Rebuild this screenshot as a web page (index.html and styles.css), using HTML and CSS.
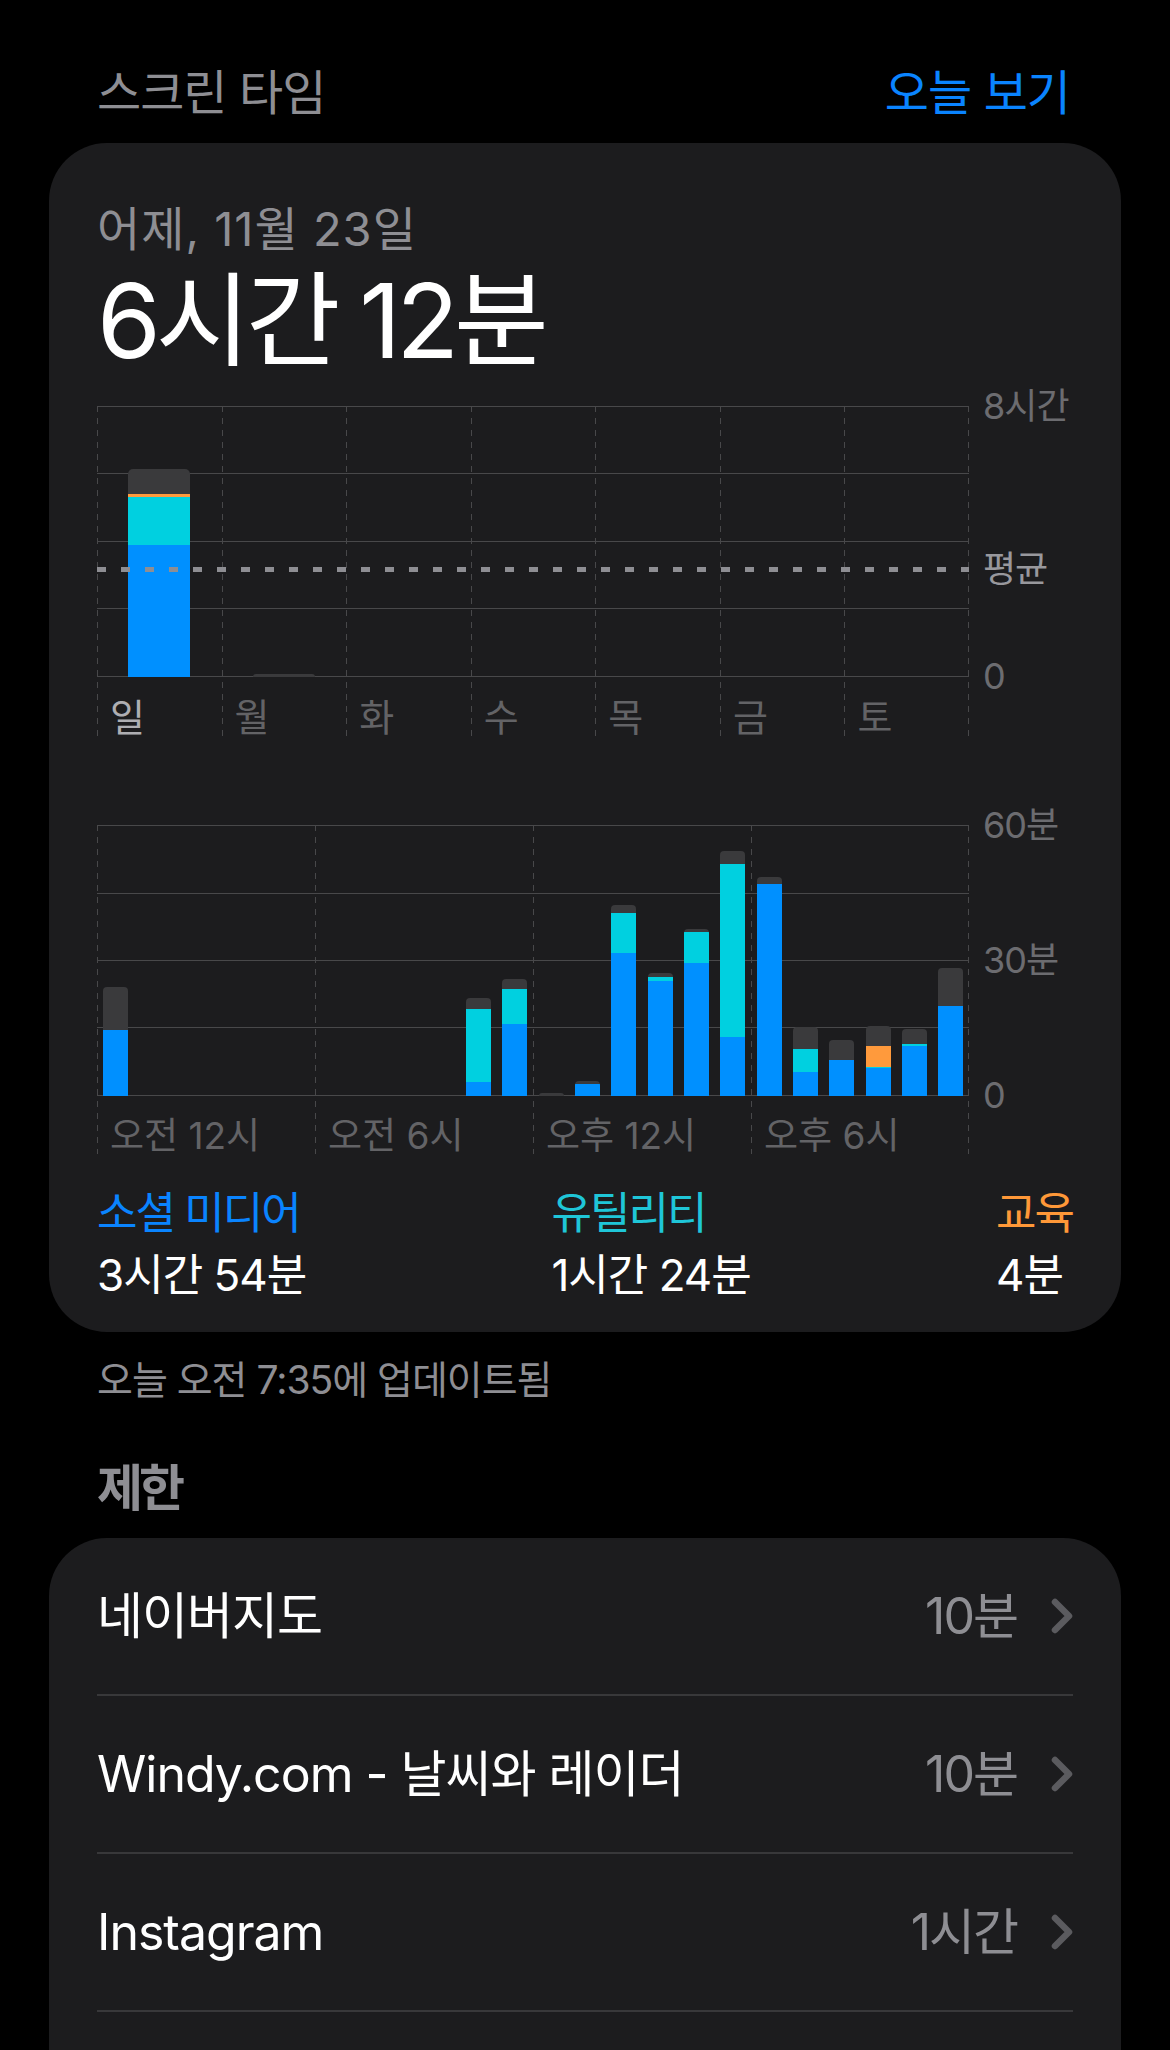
FILE: index.html
```html
<!DOCTYPE html>
<html lang="ko">
<head>
    <meta charset="UTF-8">
    <meta name="viewport" content="width=device-width, initial-scale=1.0">
    <title>스크린 타임</title>
    <link rel="stylesheet" href="styles.css">
</head>
<body>
    <div class="screen">
        <header class="nav">
            <span class="nav-title">스크린 타임</span>
            <span class="nav-link">오늘 보기</span>
        </header>

        <section class="card summary">
            <div class="date">어제, 11월 23일</div>
            <div class="total">6시간 12분</div>

            <!-- weekly chart -->
            <div class="chart week">
                <div class="plot">
                    <div class="col">
                        <div class="bar-area">
                            <div class="bar">
                                <i class="seg other" style="height:25px"></i>
                                <i class="seg edu" style="height:3px"></i>
                                <i class="seg util" style="height:48px"></i>
                                <i class="seg social" style="height:132px"></i>
                            </div>
                        </div>
                        <div class="x-label active">일</div>
                    </div>
                    <div class="col">
                        <div class="bar-area">
                            <div class="bar tiny">
                                <i class="seg other" style="height:3px"></i>
                            </div>
                        </div>
                        <div class="x-label">월</div>
                    </div>
                    <div class="col">
                        <div class="bar-area"></div>
                        <div class="x-label">화</div>
                    </div>
                    <div class="col">
                        <div class="bar-area"></div>
                        <div class="x-label">수</div>
                    </div>
                    <div class="col">
                        <div class="bar-area"></div>
                        <div class="x-label">목</div>
                    </div>
                    <div class="col">
                        <div class="bar-area"></div>
                        <div class="x-label">금</div>
                    </div>
                    <div class="col">
                        <div class="bar-area"></div>
                        <div class="x-label">토</div>
                    </div>
                    <div class="avg-line"></div>
                </div>
                <div class="y-axis">
                    <span class="y-label" style="top:0">8시간</span>
                    <span class="y-label avg" style="top:163px">평균</span>
                    <span class="y-label" style="top:270px">0</span>
                </div>
            </div>

            <!-- hourly chart -->
            <div class="chart hours">
                <div class="plot">
                    <div class="col">
                        <div class="bar-area">
                            <div class="slot">
                                <div class="bar">
                                    <i class="seg other" style="height:43px"></i>
                                    <i class="seg social" style="height:66px"></i>
                                </div>
                            </div>
                            <div class="slot"></div>
                            <div class="slot"></div>
                            <div class="slot"></div>
                            <div class="slot"></div>
                            <div class="slot"></div>
                        </div>
                        <div class="x-label">오전 12시</div>
                    </div>
                    <div class="col">
                        <div class="bar-area">
                            <div class="slot"></div>
                            <div class="slot"></div>
                            <div class="slot"></div>
                            <div class="slot"></div>
                            <div class="slot">
                                <div class="bar">
                                    <i class="seg other" style="height:11px"></i>
                                    <i class="seg util" style="height:73px"></i>
                                    <i class="seg social" style="height:14px"></i>
                                </div>
                            </div>
                            <div class="slot">
                                <div class="bar">
                                    <i class="seg other" style="height:10px"></i>
                                    <i class="seg util" style="height:35px"></i>
                                    <i class="seg social" style="height:72px"></i>
                                </div>
                            </div>
                        </div>
                        <div class="x-label">오전 6시</div>
                    </div>
                    <div class="col">
                        <div class="bar-area">
                            <div class="slot">
                                <div class="bar">
                                    <i class="seg other" style="height:3px"></i>
                                </div>
                            </div>
                            <div class="slot">
                                <div class="bar">
                                    <i class="seg other" style="height:3px"></i>
                                    <i class="seg social" style="height:12px"></i>
                                </div>
                            </div>
                            <div class="slot">
                                <div class="bar">
                                    <i class="seg other" style="height:8px"></i>
                                    <i class="seg util" style="height:40px"></i>
                                    <i class="seg social" style="height:143px"></i>
                                </div>
                            </div>
                            <div class="slot">
                                <div class="bar">
                                    <i class="seg other" style="height:4px"></i>
                                    <i class="seg util" style="height:4px"></i>
                                    <i class="seg social" style="height:115px"></i>
                                </div>
                            </div>
                            <div class="slot">
                                <div class="bar">
                                    <i class="seg other" style="height:3px"></i>
                                    <i class="seg util" style="height:31px"></i>
                                    <i class="seg social" style="height:133px"></i>
                                </div>
                            </div>
                            <div class="slot">
                                <div class="bar">
                                    <i class="seg other" style="height:13px"></i>
                                    <i class="seg util" style="height:173px"></i>
                                    <i class="seg social" style="height:59px"></i>
                                </div>
                            </div>
                        </div>
                        <div class="x-label">오후 12시</div>
                    </div>
                    <div class="col">
                        <div class="bar-area">
                            <div class="slot">
                                <div class="bar">
                                    <i class="seg other" style="height:7px"></i>
                                    <i class="seg social" style="height:212px"></i>
                                </div>
                            </div>
                            <div class="slot">
                                <div class="bar">
                                    <i class="seg other" style="height:22px"></i>
                                    <i class="seg util" style="height:23px"></i>
                                    <i class="seg social" style="height:24px"></i>
                                </div>
                            </div>
                            <div class="slot">
                                <div class="bar">
                                    <i class="seg other" style="height:20px"></i>
                                    <i class="seg social" style="height:36px"></i>
                                </div>
                            </div>
                            <div class="slot">
                                <div class="bar">
                                    <i class="seg other" style="height:20px"></i>
                                    <i class="seg edu" style="height:21px"></i>
                                    <i class="seg util" style="height:1px"></i>
                                    <i class="seg social" style="height:28px"></i>
                                </div>
                            </div>
                            <div class="slot">
                                <div class="bar">
                                    <i class="seg other" style="height:15px"></i>
                                    <i class="seg util" style="height:2px"></i>
                                    <i class="seg social" style="height:50px"></i>
                                </div>
                            </div>
                            <div class="slot">
                                <div class="bar">
                                    <i class="seg other" style="height:38px"></i>
                                    <i class="seg social" style="height:90px"></i>
                                </div>
                            </div>
                        </div>
                        <div class="x-label">오후 6시</div>
                    </div>
                </div>
                <div class="y-axis">
                    <span class="y-label" style="top:0">60분</span>
                    <span class="y-label" style="top:135px">30분</span>
                    <span class="y-label" style="top:270px">0</span>
                </div>
            </div>

            <div class="legend">
                <div class="legend-item">
                    <div class="legend-name social-text">소셜 미디어</div>
                    <div class="legend-value">3시간 54분</div>
                </div>
                <div class="legend-item">
                    <div class="legend-name util-text">유틸리티</div>
                    <div class="legend-value">1시간 24분</div>
                </div>
                <div class="legend-item">
                    <div class="legend-name edu-text">교육</div>
                    <div class="legend-value">4분</div>
                </div>
            </div>
        </section>

        <p class="updated">오늘 오전 7:35에 업데이트됨</p>

        <h2 class="section-title">제한</h2>

        <section class="card list">
            <div class="row">
                <span class="row-name">네이버지도</span>
                <span class="row-value">10분</span>
                <svg class="chevron" viewBox="0 0 22 36"><path d="M4 4l14 14L4 32"/></svg>
            </div>
            <div class="row">
                <span class="row-name">Windy.com - 날씨와 레이더</span>
                <span class="row-value">10분</span>
                <svg class="chevron" viewBox="0 0 22 36"><path d="M4 4l14 14L4 32"/></svg>
            </div>
            <div class="row">
                <span class="row-name">Instagram</span>
                <span class="row-value">1시간</span>
                <svg class="chevron" viewBox="0 0 22 36"><path d="M4 4l14 14L4 32"/></svg>
            </div>
            <div class="row last"></div>
        </section>
    </div>
</body>
</html>
```

FILE: styles.css
```css
body {
    margin: 0;
    background-color: #000;
    color: #fff;
    font-family: Inter, "Noto Sans CJK KR", sans-serif;
}

.screen {
    width: 1170px;
    overflow: hidden;
}

/* top bar */
.nav {
    display: flex;
    justify-content: space-between;
    padding: 69px 100px 0 97px;
    font-size: 48px;
    line-height: 1;
    letter-spacing: -1px;
}

.nav-title {
    color: #8e8e93;
}

.nav-link {
    color: #0a84ff;
}

.card {
    margin: 0 49px;
    background-color: #1c1c1e;
    border-radius: 58px;
}

.summary {
    margin-top: 26px;
    padding: 62px 48px 26px;
}

.date {
    font-size: 47px;
    line-height: 1;
    color: #8e8e93;
    letter-spacing: 1px;
}

.total {
    margin-top: 17px;
    font-size: 103px;
    line-height: 1;
    letter-spacing: -5px;
}

/* charts */
.chart {
    display: grid;
    grid-template-columns: 872px 1fr;
}

.chart.week {
    margin-top: 34px;
}

.chart.hours {
    margin-top: 89px;
}

.plot {
    position: relative;
    display: flex;
    background-image: linear-gradient(#48484a 50%, transparent 50%);
    background-size: 1px 12px;
    background-repeat: repeat-y;
    background-position: right top;
}

.col {
    flex: 1;
    min-width: 0;
    background-image: linear-gradient(#48484a 50%, transparent 50%);
    background-size: 1px 12px;
    background-repeat: repeat-y;
    background-position: left top;
}

.bar-area {
    height: 271px;
    display: flex;
    align-items: flex-end;
    justify-content: center;
    background-image: repeating-linear-gradient(to bottom, #48484a 0, #48484a 1px, transparent 1px, transparent 67.5px);
}

.slot {
    flex: 1;
    display: flex;
    align-items: flex-end;
    justify-content: center;
}

.bar {
    display: flex;
    flex-direction: column;
    width: 62px;
    border-radius: 5px 5px 0 0;
    overflow: hidden;
}

.bar.tiny {
    border-radius: 3px 3px 0 0;
}

.hours .bar {
    width: 25px;
    border-radius: 4px 4px 0 0;
}

.seg {
    display: block;
}

.seg.other { background-color: #3a3a3c; }
.seg.edu { background-color: #ff9a3c; }
.seg.util { background-color: #00d0e0; }
.seg.social { background-color: #0090ff; }

.x-label {
    margin-top: 21px;
    padding-left: 13px;
    font-size: 38px;
    line-height: 1;
    color: #636366;
    letter-spacing: -1px;
    white-space: nowrap;
}

.x-label.active {
    color: #aeaeb2;
}

.hours .x-label {
    font-size: 37px;
    margin-top: 21px;
    letter-spacing: 0;
}

.avg-line {
    position: absolute;
    left: 0;
    right: 0;
    top: 161px;
    height: 5px;
    background-image: repeating-linear-gradient(to right, #8e8e93 0, #8e8e93 9px, transparent 9px, transparent 24px);
}

.y-axis {
    position: relative;
}

.y-label {
    position: absolute;
    left: 14px;
    transform: translateY(-50%);
    font-size: 36px;
    line-height: 1;
    color: #6c6c70;
    letter-spacing: -1px;
    white-space: nowrap;
}

.y-label.avg {
    color: #98989d;
}

/* legend */
.legend {
    display: flex;
    justify-content: space-between;
    margin-top: 28px;
}

.legend-name,
.legend-value {
    font-size: 44px;
    line-height: 62px;
    letter-spacing: -2px;
    white-space: nowrap;
}

.legend-value {
    letter-spacing: -1px;
}

.social-text { color: #0a84ff; }
.util-text { color: #1fc6d8; }
.edu-text { color: #ff9838; }

.updated {
    margin: 28px 0 0 97px;
    font-size: 39px;
    line-height: 1;
    color: #8e8e93;
    letter-spacing: -1px;
}

.section-title {
    margin: 64px 0 0 97px;
    font-size: 50px;
    font-weight: 700;
    line-height: 1;
    color: #8e8e93;
    letter-spacing: -4px;
}

/* limits list */
.list {
    margin-top: 25px;
    padding: 0 48px;
}

.row {
    display: flex;
    align-items: center;
    height: 156px;
    border-bottom: 2px solid #38383a;
    font-size: 50px;
    line-height: 1;
    letter-spacing: -1px;
}

.row.last {
    border-bottom: none;
}

.row-name {
    flex: 1;
}

.row-value {
    margin-right: 34px;
    color: #8e8e93;
    letter-spacing: -2px;
}

.chevron {
    width: 22px;
    height: 36px;
}

.chevron path {
    fill: none;
    stroke: #5b5b5f;
    stroke-width: 6.5;
    stroke-linecap: round;
    stroke-linejoin: round;
}
```
